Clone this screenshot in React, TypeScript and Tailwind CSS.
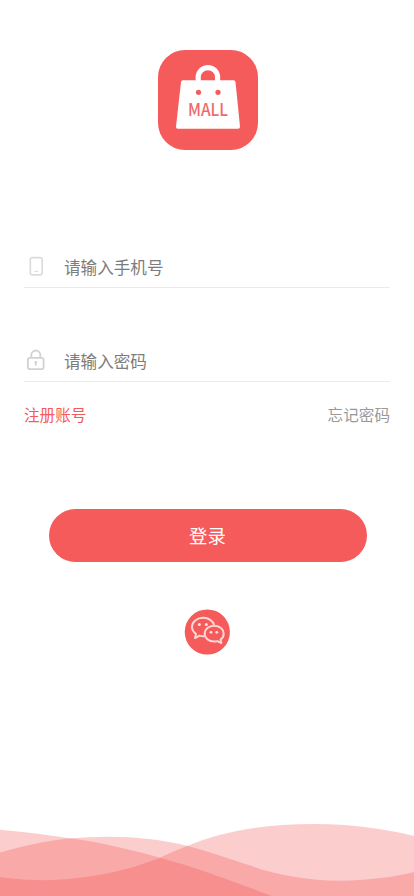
import React from "react";

function MallLogo() {
  return (
    <svg className="h-[100px] w-[100px]" viewBox="0 0 100 100" aria-label="MALL">
      <rect width="100" height="100" rx="27" fill="#f55b5b" />
      <path d="M40.200 33V27.300a9.700 9.700 0 0 1 19.400 0V33" fill="none" stroke="#fff" strokeWidth="5.200" />
      <path d="M25 30.300H75.500a2 2 0 0 1 2 1.800L82 76.500a2 2 0 0 1-2 2.200H20a2 2 0 0 1-2-2.200L23 32.100a2 2 0 0 1 2-1.800Z" fill="#fff" />
      <circle cx="40.500" cy="42.300" r="2.600" fill="#f55b5b" />
      <circle cx="60" cy="42.300" r="2.600" fill="#f55b5b" />
      <text x="50" y="66" textAnchor="middle" textLength="40" lengthAdjust="spacingAndGlyphs" fontSize="17" fontFamily="'Noto Sans CJK SC', sans-serif" fontWeight="500" fill="#f0696b">MALL</text>
    </svg>
  );
}

function PhoneIcon() {
  return (
    <svg className="h-6 w-6" viewBox="0 0 24 24" fill="none" stroke="#dcdcdc" strokeWidth="1.700">
      <rect x="6.300" y="3.700" width="11.900" height="17.200" rx="2.200" />
      <path d="M10.500 17.500h3.500" strokeWidth="1.200" />
    </svg>
  );
}

function LockIcon() {
  return (
    <svg className="h-6 w-6" viewBox="0 0 24 24" fill="none" stroke="#d2d2d2" strokeWidth="1.800">
      <rect x="3.900" y="9.900" width="15.700" height="11.300" rx="2.200" />
      <path d="M7.300 9.700V7a4.500 4.500 0 0 1 9 0v2.700" />
      <path d="M11.800 14.500v3.200" strokeWidth="1.500" />
      <circle cx="11.800" cy="14.400" r="1.300" fill="#d2d2d2" stroke="none" />
    </svg>
  );
}

function WechatIcon() {
  return (
    <svg className="h-[46px] w-[46px]" viewBox="0 0 46 46">
      <circle cx="23.300" cy="23" r="22.600" fill="#f55b5b" />
      <g fill="none" stroke="#ffd8d6" strokeWidth="2" strokeLinejoin="round">
        <path d="M20.300 27.200c-1.600.1-3.200-.1-4.600-.6L11 29l1-4.200C9.400 23.200 8 20.800 8 18.100c0-5.200 5-9.300 11.200-9.300 5.400 0 9.800 3 10.900 7.300" />
        <path d="M30.200 16.700c5.500 0 9.500 3.500 9.500 8 0 2.300-1.200 4.400-3.100 5.800l.7 3.500-3.900-1.900c-1 .3-2.100.5-3.200.5-5.500 0-9.600-3.500-9.600-7.900s4.100-8 9.600-8Z" />
      </g>
      <g fill="#ffe1df">
        <circle cx="15.300" cy="15.400" r="1.500" />
        <circle cx="22.300" cy="15.400" r="1.500" />
        <circle cx="27" cy="23.300" r="1.400" />
        <circle cx="32.800" cy="23.300" r="1.400" />
      </g>
    </svg>
  );
}

function Waves() {
  return (
    <svg className="mt-auto block h-[76px] w-full" viewBox="0 820 414 76" preserveAspectRatio="none" fill="#f64b4b" fillOpacity="0.28">
      <path d="M0 829.800C24 832 48 835 72 838.500C104 843 132 850 160 857.700C198 868 235 882 272 896H0Z" />
      <path d="M0 852.500C24 846 46 840.500 72 838.300C112 834.800 153 837.200 188 846C217 853.500 244 864.500 271 872C318 884.500 371 882.500 414 872V896H0Z" />
      <path d="M0 877C28 881 54 881.200 80 877.800C110 874 135 867.500 160 857.700C172 852 181 848.500 188 845.800C220 832 262 824 314 824C350 824 384 828.500 414 836V896H0Z" />
    </svg>
  );
}

function Field({ icon, placeholder, type }: { icon: React.ReactNode; placeholder: string; type: string }) {
  return (
    <label className="flex h-[42px] items-center border-b border-[#ebebeb] pb-px">
      {icon}
      <input
        type={type}
        placeholder={placeholder}
        className="ml-4 min-w-0 flex-1 bg-transparent pt-px text-[16.600px] leading-6 outline-none placeholder:text-[#7c7c7c]"
      />
    </label>
  );
}

export default function App() {
  return (
    <main className="flex h-screen flex-col overflow-hidden bg-white font-['Noto_Sans_CJK_SC',sans-serif]">
      <div className="flex justify-center pt-[50px] pl-[2px]">
        <MallLogo />
      </div>
      <form className="mt-[96px] px-6">
        <Field icon={<PhoneIcon />} placeholder="请输入手机号" type="tel" />
        <div className="mt-[52px]">
          <Field icon={<LockIcon />} placeholder="请输入密码" type="password" />
        </div>
        <div className="mt-5 flex justify-between text-[15.600px] leading-6">
          <a className="text-[#f55b5b]">注册账号</a>
          <a className="text-[#999]">忘记密码</a>
        </div>
        <button type="button" className="mt-[83px] ml-[25px] block h-[53px] w-[318px] rounded-full bg-[#f55b5b] pr-px text-[18.400px] text-white">
          登录
        </button>
      </form>
      <div className="mt-[47px] flex justify-center">
        <WechatIcon />
      </div>
      <Waves />
    </main>
  );
}
